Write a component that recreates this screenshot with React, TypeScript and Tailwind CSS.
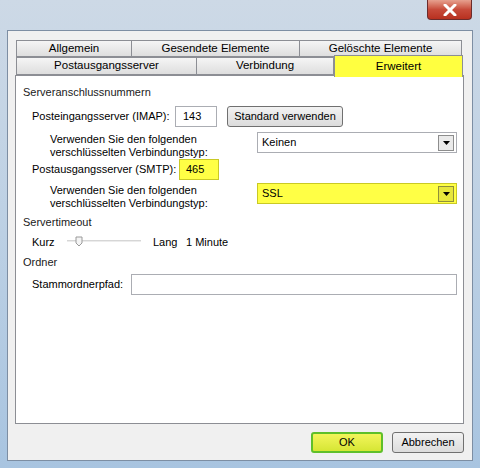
import React from "react";

const font = { fontFamily: '"Liberation Sans", Arial, sans-serif' };

function Tab({ label, width, active }: { label: string; width: string; active?: boolean }) {
  if (active) {
    return (
      <div
        className={`${width} -mt-[2px] h-[22px] -mb-[2px] relative z-10 flex items-center justify-center border border-b-0 border-[#8c8e94] bg-[#ffff40] text-[11.5px] text-black`}
      >
        {label}
      </div>
    );
  }
  return (
    <div
      className={`${width} h-full flex items-center justify-center border border-l-0 first:border-l border-[#8c8e94] bg-gradient-to-b from-[#f5f5f5] to-[#dedede] text-[11.5px] text-black`}
    >
      {label}
    </div>
  );
}

function SectionHeading({ label }: { label: string }) {
  return (
    <div className="flex items-center h-[14px] pr-[8px]">
      <span className="text-[11px] text-[#1a1a1a] leading-none whitespace-nowrap">{label}</span>
      <div className="flex-1 ml-[5px] h-px bg-[#c8ccd2] border-b border-white" />
    </div>
  );
}

function Select({ value, highlight }: { value: string; highlight?: boolean }) {
  return (
    <div
      className={`w-[200px] h-[21px] flex items-center justify-between pl-[4px] pr-[2px] border ${
        highlight ? "bg-[#ffff45] border-[#c9c925]" : "bg-white border-[#abadb3]"
      }`}
    >
      <span className="text-[11px] text-black">{value}</span>
      <div
        className={`w-[16px] h-[16px] flex items-center justify-center border ${
          highlight ? "border-[#8f8f3a] bg-[#e6e63c]" : "border-[#8d8d8d] bg-[#eaeaea]"
        }`}
      >
        <svg width="7" height="4" viewBox="0 0 7 4">
          <path d="M0 0h7L3.5 4z" fill="#000" />
        </svg>
      </div>
    </div>
  );
}

export default function App() {
  return (
    <div
      className="w-[480px] h-[468px] overflow-hidden flex flex-col bg-gradient-to-b from-[#cdd9e6] via-[#bcd0e4] to-[#a8c4e0]"
      style={font}
    >
      <div className="h-[30px] flex justify-end pr-[8px]">
        <div className="w-[45px] h-[20px] rounded-b-[4px] border border-t-0 border-[#6b2b2b] bg-gradient-to-b from-[#e6a08f] via-[#c74a3a] to-[#b8301f] flex items-center justify-center">
          <svg width="14" height="12" viewBox="0 0 14 12">
            <path d="M2 1l10 10M12 1L2 11" stroke="#fff" strokeWidth="3" strokeLinecap="round" />
          </svg>
        </div>
      </div>

      <div className="mx-[7px] h-[431px] bg-[#f0f0f0] border border-[#7d8ea3] flex flex-col pt-[9px] pl-[7px] pr-[8px]">
        <div className="flex h-[17px] ml-[1px] w-[446px]">
          <Tab label="Allgemein" width="w-[116px]" />
          <Tab label="Gesendete Elemente" width="w-[168px]" />
          <Tab label="Gelöschte Elemente" width="w-[162px]" />
        </div>
        <div className="flex h-[18px] ml-[1px] w-[447px]">
          <Tab label="Postausgangsserver" width="w-[181px]" />
          <Tab label="Verbindung" width="w-[137px]" />
          <Tab label="Erweitert" width="w-[129px]" active />
        </div>

        <div className="w-[449px] h-[349px] bg-white border border-[#8c8e94] flex flex-col pl-[7px] pt-[9px] text-[11px] text-black whitespace-nowrap">
          <SectionHeading label="Serveranschlussnummern" />

          <div className="flex items-center h-[21px] mt-[7px] pl-[9px]">
            <span className="w-[143px]">Posteingangsserver (IMAP):</span>
            <div className="w-[42px] h-[21px] border border-[#abadb3] bg-white flex items-center pl-[7px]">143</div>
            <div className="ml-[10px] w-[116px] h-[21px] rounded-[3px] border border-[#707070] bg-gradient-to-b from-[#f2f2f2] to-[#dcdcdc] flex items-center justify-center">
              Standard verwenden
            </div>
          </div>

          <div className="flex h-[27px] mt-[5px] pl-[27px]">
            <div className="w-[207px] leading-[13px] pt-[1px]">
              Verwenden Sie den folgenden
              <br />
              verschlüsselten Verbindungstyp:
            </div>
            <Select value="Keinen" />
          </div>

          <div className="flex items-center h-[21px] mt-0 pl-[9px]">
            <span className="w-[147px]">Postausgangsserver (SMTP):</span>
            <div className="w-[40px] h-[21px] border border-[#c9c925] bg-[#ffff45] flex items-center pl-[6px]">465</div>
          </div>

          <div className="flex h-[27px] mt-[3px] pl-[27px]">
            <div className="w-[207px] leading-[13px] pt-[1px]">
              Verwenden Sie den folgenden
              <br />
              verschlüsselten Verbindungstyp:
            </div>
            <Select value="SSL" highlight />
          </div>

          <div className="mt-[5px]">
            <SectionHeading label="Servertimeout" />
          </div>

          <div className="flex items-center h-[14px] mt-[6px] pl-[9px]">
            <span className="w-[35px]">Kurz</span>
            <svg width="76" height="12" viewBox="0 0 76 12">
              <rect x="0" y="4" width="74" height="2" fill="#d6d6d6" />
              <rect x="0" y="5" width="74" height="1" fill="#ececec" />
              <path d="M9 1h6v6l-3 3-3-3z" fill="#f4f4f4" stroke="#9a9a9a" />
            </svg>
            <span className="ml-[10px] w-[33px]">Lang</span>
            <span>1 Minute</span>
          </div>

          <div className="mt-[6px]">
            <SectionHeading label="Ordner" />
          </div>

          <div className="flex items-center h-[21px] mt-[5px] pl-[9px]">
            <span className="w-[99px]">Stammordnerpfad:</span>
            <div className="w-[326px] h-[21px] border border-[#abadb3] bg-white" />
          </div>
        </div>

        <div className="flex justify-end gap-[9px] mt-[8px]">
          <div className="w-[72px] h-[21px] rounded-[3px] border-2 border-[#5fbf2a] bg-gradient-to-b from-[#f3f55a] to-[#d6e633] flex items-center justify-center text-[11px] text-black">
            OK
          </div>
          <div className="w-[72px] h-[21px] rounded-[3px] border border-[#707070] bg-gradient-to-b from-[#f2f2f2] to-[#dcdcdc] flex items-center justify-center text-[11px] text-black">
            Abbrechen
          </div>
        </div>
      </div>
    </div>
  );
}
